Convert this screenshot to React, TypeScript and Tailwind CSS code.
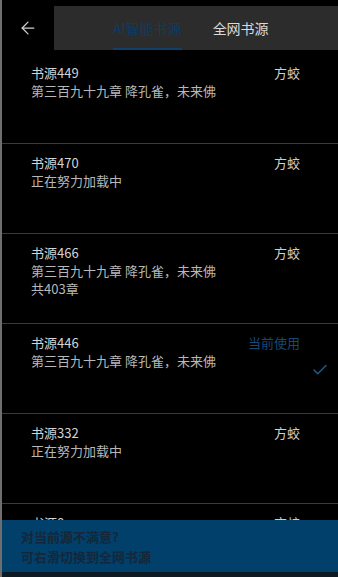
import React from 'react';
import { ArrowLeft, Check } from 'lucide-react';

interface Source {
  name: string;
  lines: string[];
  author: string;
  current?: boolean;
}

const sources: Source[] = [
  { name: '书源449', lines: ['第三百九十九章 降孔雀，未来佛'], author: '方蛟' },
  { name: '书源470', lines: ['正在努力加载中'], author: '方蛟' },
  { name: '书源466', lines: ['第三百九十九章 降孔雀，未来佛', '共403章'], author: '方蛟' },
  { name: '书源446', lines: ['第三百九十九章 降孔雀，未来佛'], author: '当前使用', current: true },
  { name: '书源332', lines: ['正在努力加载中'], author: '方蛟' },
  // only the top edge of this one shows above the tip
  { name: '书源8', lines: [], author: '方蛟' },
];

const SourceRow: React.FC<{ item: Source }> = ({ item }) => (
  <div className="relative h-[90px] shrink-0 border-b border-[#3a3a3a] pl-[29px] pr-[38px] pt-[10px]">
    <div className="flex items-center justify-between leading-[18px]">
      <span className="text-[13px] text-[#d4d4d4]">{item.name}</span>
      <span className={item.current ? 'text-[13px] text-[#144a73]' : 'text-[13px] text-[#cfcfcf]'}>
        {item.author}
      </span>
    </div>
    {item.lines.map((l) => (
      <div key={l} className="text-[13px] leading-[18px] text-[#b8b8b8]">
        {l}
      </div>
    ))}
    {item.current && (
      <Check size={18} strokeWidth={2} className="absolute right-[9px] top-[37px] text-[#1f5a86]" />
    )}
  </div>
);

export default function App() {
  return (
    <div
      className="flex h-[577px] w-[338px] overflow-hidden bg-black"
      style={{ fontFamily: '"Noto Sans CJK SC", "Noto Sans", sans-serif' }}
    >
      <div className="w-[2px] shrink-0 bg-[#6e6e6e]" />
      <div className="flex min-w-0 flex-1 flex-col">
        {/* header */}
        <div className="flex h-[54px] shrink-0 pt-[6px]">
          <div className="flex w-[52px] items-start justify-center pt-[12px]">
            <ArrowLeft size={20} strokeWidth={1.5} className="text-[#d0d0d0]" />
          </div>
          <div className="flex h-[44px] flex-1 items-stretch bg-[#2c2c2c] pl-[59px]">
            <div className="relative flex items-center text-[14px] text-[#0f3b60]">
              AI智能书源
              <div className="absolute bottom-0 left-0 right-0 h-[2px] bg-[#124068]" />
            </div>
            <div className="ml-[31px] flex items-center text-[14px] text-[#dadada]">全网书源</div>
          </div>
        </div>
        {/* list */}
        <div className="flex min-h-0 flex-1 flex-col overflow-hidden">
          {sources.map((s) => (
            <SourceRow key={s.name} item={s} />
          ))}
        </div>
        {/* tip banner */}
        <div className="flex shrink-0 flex-col">
          <div className="h-[52px] bg-[#00406b] pl-[19px] pt-[7px] text-[13px] font-bold leading-[20px] text-[#16273a]">
            <div>对当前源不满意?</div>
            <div>可右滑切换到全网书源</div>
          </div>
          <div className="h-[5px] bg-[#0e1b25]" />
        </div>
      </div>
    </div>
  );
}
